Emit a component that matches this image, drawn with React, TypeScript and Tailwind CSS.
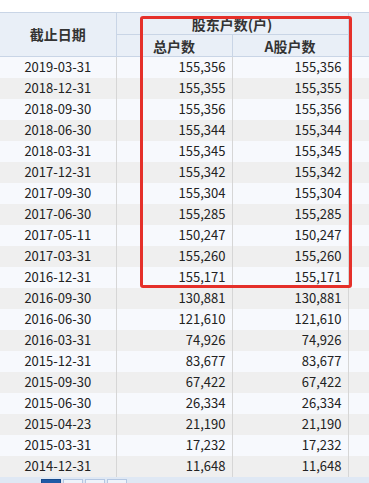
import React from "react";

const rows: [string, string, string][] = [
  ["2019-03-31", "155,356", "155,356"],
  ["2018-12-31", "155,355", "155,355"],
  ["2018-09-30", "155,356", "155,356"],
  ["2018-06-30", "155,344", "155,344"],
  ["2018-03-31", "155,345", "155,345"],
  ["2017-12-31", "155,342", "155,342"],
  ["2017-09-30", "155,304", "155,304"],
  ["2017-06-30", "155,285", "155,285"],
  ["2017-05-11", "150,247", "150,247"],
  ["2017-03-31", "155,260", "155,260"],
  ["2016-12-31", "155,171", "155,171"],
  ["2016-09-30", "130,881", "130,881"],
  ["2016-06-30", "121,610", "121,610"],
  ["2016-03-31", "74,926", "74,926"],
  ["2015-12-31", "83,677", "83,677"],
  ["2015-09-30", "67,422", "67,422"],
  ["2015-06-30", "26,334", "26,334"],
  ["2015-04-23", "21,190", "21,190"],
  ["2015-03-31", "17,232", "17,232"],
  ["2014-12-31", "11,648", "11,648"],
];

export default function App() {
  return (
    <div
      className="relative w-[369px] h-[483px] overflow-hidden bg-white text-[#222]"
      style={{ fontFamily: '"Noto Sans CJK SC", "Noto Sans", sans-serif' }}
    >
      <div className="h-[12px]" />
      <table className="border-collapse table-fixed w-[369px] text-[13px]">
        <colgroup>
          <col className="w-[116px]" />
          <col className="w-[116px]" />
          <col className="w-[116px]" />
          <col className="w-[21px]" />
        </colgroup>
        <thead>
          <tr className="h-[22px] bg-[#e9eff7]">
            <th
              rowSpan={2}
              className="border-t border-b border-r border-[#c9d5e6] font-bold text-[14px] text-[#333] text-center p-0"
            >
              截止日期
            </th>
            <th
              colSpan={2}
              className="border-t border-b border-r border-[#c9d5e6] font-bold text-[14px] text-[#333] text-center leading-[20px] p-0"
            >
              股东户数(户)
            </th>
            <th rowSpan={2} className="border-t border-b border-[#c9d5e6] p-0" />
          </tr>
          <tr className="h-[22px] bg-[#e9eff7]">
            <th className="border-b border-r border-[#c9d5e6] font-bold text-[14px] text-[#333] text-center leading-[20px] p-0">
              总户数
            </th>
            <th className="border-b border-r border-[#c9d5e6] font-bold text-[14px] text-[#333] text-center leading-[20px] p-0">
              A股户数
            </th>
          </tr>
        </thead>
        <tbody>
          {rows.map((r, i) => (
            <tr
              key={r[0]}
              className={`h-[21px] ${i % 2 === 0 ? "bg-[#f7f9fd]" : "bg-[#efefef]"}`}
            >
              <td className="border-r border-[#d6d6d6] text-center p-0 leading-[20px]">
                {r[0]}
              </td>
              <td className="border-r border-[#d6d6d6] text-right pr-[6px] py-0 pl-0 leading-[20px]">
                {r[1]}
              </td>
              <td className="border-r border-[#d6d6d6] text-right pr-[6px] py-0 pl-0 leading-[20px]">
                {r[2]}
              </td>
              <td className="p-0" />
            </tr>
          ))}
        </tbody>
      </table>
      <div className="absolute left-0 top-[477px] w-[369px] h-[20px] bg-[#dfe8f4] flex gap-[2px] pl-[41px] pt-[2px]">
        <div className="w-[20px] h-[18px] bg-[#1f5aa6] border border-[#174a8c]" />
        <div className="w-[20px] h-[18px] bg-[#eef3fa] border border-[#b4c7e2]" />
        <div className="w-[20px] h-[18px] bg-[#eef3fa] border border-[#b4c7e2]" />
        <div className="w-[20px] h-[18px] bg-[#eef3fa] border border-[#b4c7e2]" />
      </div>
      <div className="absolute left-[140px] top-[16px] w-[212px] h-[272px] border-[3px] border-[#e5302a] rounded-[3px]" />
    </div>
  );
}
